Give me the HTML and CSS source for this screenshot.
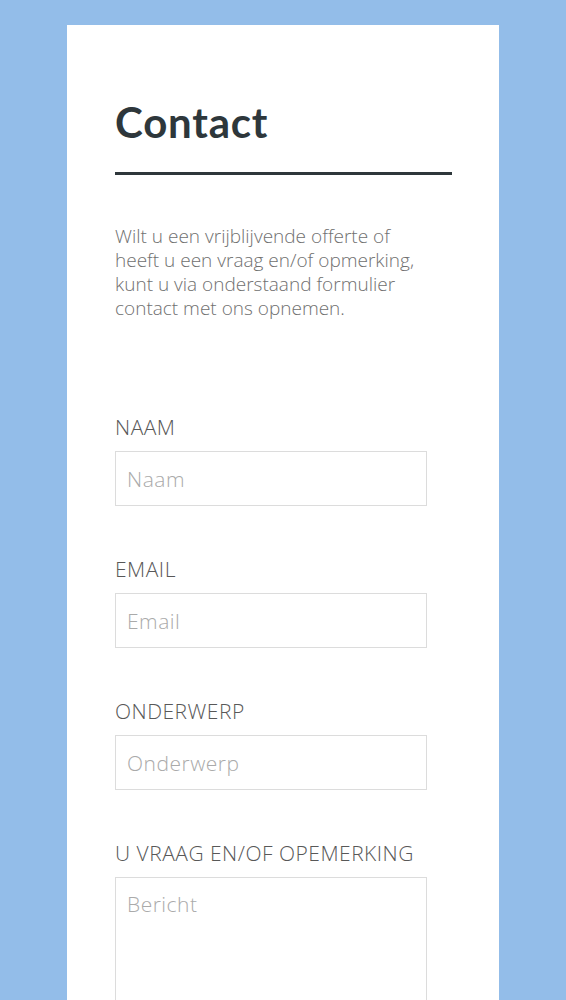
FILE: index.html
```html
<!DOCTYPE html>
<html lang="nl">
<head>
  <meta charset="UTF-8" />
  <meta name="viewport" content="width=device-width, initial-scale=1.0"/>
  <title>Contact</title>
  <link rel="stylesheet" href="styles.css">
</head>
<body>

<div class="container">
  <h2 class="title">Contact</h2>

  <p class="intro">Wilt u een vrijblijvende offerte of heeft u een vraag en/of opmerking, kunt u via onderstaand formulier contact met ons opnemen.</p>

  <!-- Contact Form -->
  <form id="contact-form" method="POST">
    <div class="form-group">
      <label for="naam">Naam</label>
      <input type="text" id="naam" name="naam" placeholder="Naam">
    </div>
    <div class="form-group">
      <label for="email">Email</label>
      <input type="email" id="email" name="email" placeholder="Email">
    </div>
    <div class="form-group">
      <label for="onderwerp">Onderwerp</label>
      <input type="text" id="onderwerp" name="onderwerp" placeholder="Onderwerp">
    </div>
    <div class="form-group">
      <label for="bericht">U vraag en/of opemerking</label>
      <textarea id="bericht" name="bericht" rows="6" placeholder="Bericht"></textarea>
    </div>
  </form>
</div>

</body>
</html>
```

FILE: styles.css
```css
body {
  font-family: "Open Sans", Arial, sans-serif;
  background-color: #93bde9;
  margin: 0;
  padding: 25px 67px 0 67px;
}
.container {
  background-color: #fff;
  padding: 72px 47px 20px 48px;
  min-height: 975px;
  box-sizing: border-box;
}
.title {
  font-family: Lato, Arial, sans-serif;
  font-weight: 700;
  font-size: 42px;
  line-height: 50px;
  letter-spacing: 0.8px;
  color: #2e373b;
  margin: 0;
  padding-bottom: 25px;
  border-bottom: 3px solid #2e373b;
}
.intro {
  width: 312px;
  font-weight: 300;
  font-size: 19px;
  line-height: 24px;
  color: #707070;
  margin: 49px 0 0 0;
}
#contact-form {
  margin-top: 94px;
}
.form-group {
  margin-bottom: 50px;
}
.form-group:last-child {
  margin-bottom: 0;
}
label {
  display: block;
  font-weight: 300;
  font-size: 21px;
  line-height: 26px;
  letter-spacing: 0.5px;
  text-transform: uppercase;
  color: #585858;
  margin-bottom: 11px;
}
input, textarea {
  display: block;
  width: 312px;
  height: 55px;
  padding: 0 11px;
  border: 1px solid #dcdcdc;
  border-radius: 0;
  box-sizing: border-box;
  font-family: "Open Sans", Arial, sans-serif;
  font-weight: 300;
  font-size: 21px;
  letter-spacing: 0.5px;
  color: #555;
  outline: none;
}
textarea {
  height: 150px;
  padding: 12px 11px;
  resize: none;
}
input::placeholder, textarea::placeholder {
  color: #aaa;
}
```
